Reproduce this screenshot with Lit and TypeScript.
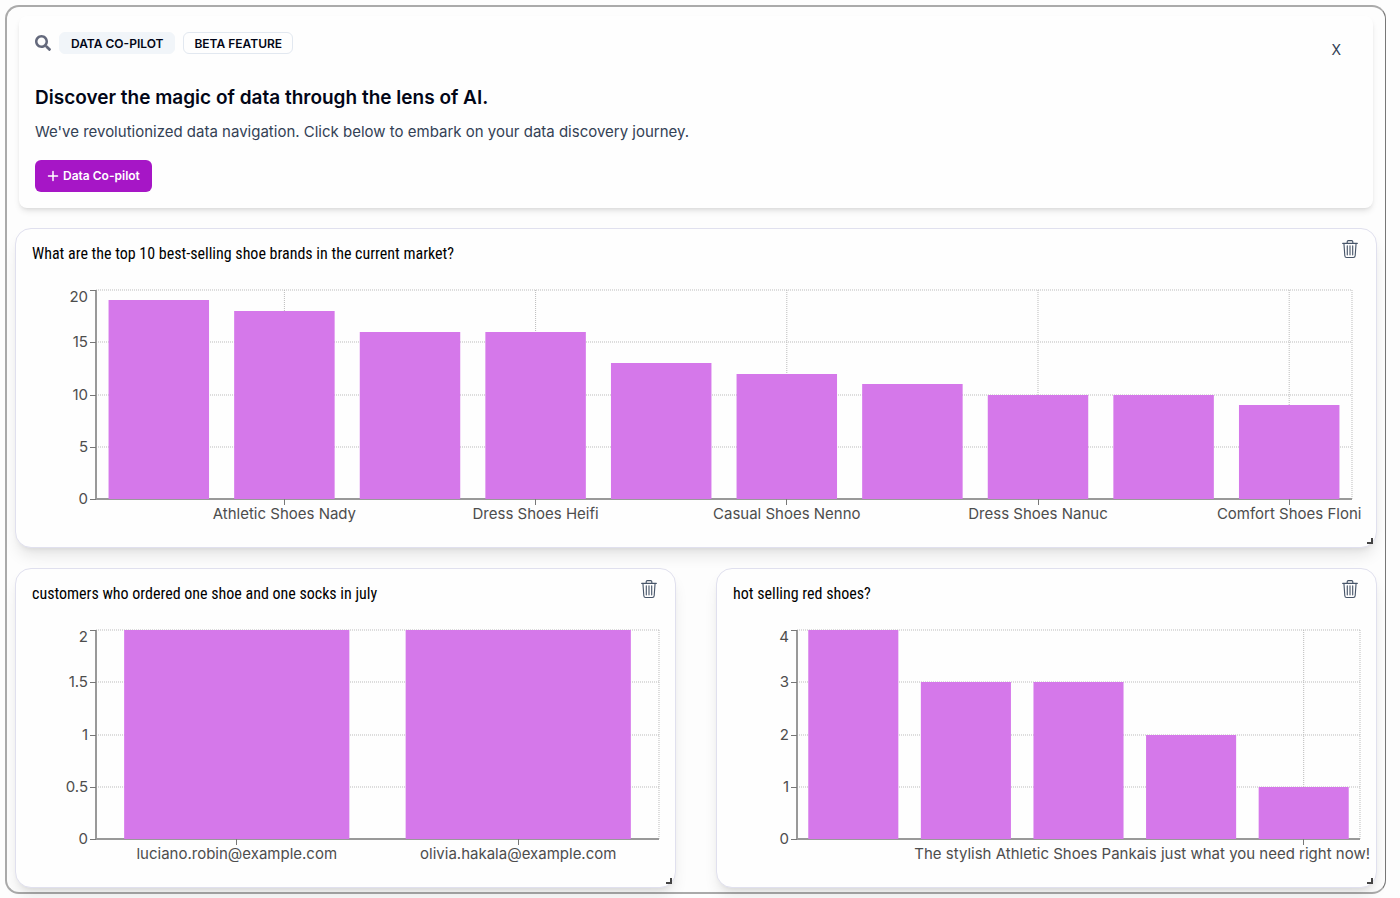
import { LitElement, html, svg, css } from "lit";
import { customElement, property } from "lit/decorators.js";

interface Bar {
  label: string;
  value: number;
  align: "none" | "middle" | "edge";
}

const bar = (value: number, label = "", align: Bar["align"] = label ? "middle" : "none"): Bar => ({
  label,
  value,
  align,
});

const PLOT_HEIGHT = 209;

@customElement("bar-chart")
export class BarChart extends LitElement {
  @property({ attribute: false }) bars: Bar[] = [];
  @property({ attribute: false }) ticks: number[] = [];
  @property() name = "";

  static styles = css`
    :host {
      display: block;
    }
    svg {
      display: block;
      width: 100%;
      height: 209px;
      overflow: visible;
    }
    text {
      font: 400 15px Inter, "Liberation Sans", sans-serif;
      fill: #4d4d4d;
    }
    .middle {
      text-anchor: middle;
    }
    .edge,
    .y-label {
      text-anchor: end;
    }
    .grid {
      stroke: #bbb;
      stroke-dasharray: 1 1;
    }
    .axis {
      stroke: #999;
      stroke-width: 2;
      shape-rendering: crispEdges;
    }
    .tick {
      stroke: #777;
      shape-rendering: crispEdges;
    }
    .bar {
      fill: #d578ea;
    }
  `;

  render() {
    const max = Math.max(...this.ticks, 1);
    const y = (v: number) => Math.round(PLOT_HEIGHT * (1 - v / max));
    const band = 100 / Math.max(this.bars.length, 1);
    const center = (i: number) => `${band * (i + 0.5)}%`;
    const labelled = this.bars.map((b, i) => ({ ...b, i })).filter((b) => b.align !== "none");
    return html`
      <svg role="img" aria-label=${this.name}>
        ${this.ticks.map((t) => svg`<line class="grid" x1="0" x2="100%" y1=${y(t)} y2=${y(t)} />`)}
        ${labelled.map((b) => svg`<line class="grid" x1=${center(b.i)} x2=${center(b.i)} y1="0" y2=${PLOT_HEIGHT} />`)}
        <line class="grid" x1="100%" x2="100%" y1="0" y2=${PLOT_HEIGHT} />
        <line class="axis" x1="0" x2="100%" y1=${PLOT_HEIGHT} y2=${PLOT_HEIGHT} />
        <line class="axis" x1="0" x2="0" y1="0" y2=${PLOT_HEIGHT} />
        ${this.bars.map(
          (b, i) => svg`<rect class="bar" x="${band * (i + 0.1)}%" width="${band * 0.8}%"
            y=${y(b.value)} height=${PLOT_HEIGHT - y(b.value)} />`
        )}
        ${this.ticks.map(
          (t) => svg`<line class="tick" x1="-6" x2="0" y1=${y(t)} y2=${y(t)} />
            <text class="y-label" x="-8" y=${Math.max(y(t), 7) + 5}>${t}</text>`
        )}
        ${labelled.map(
          (b) => svg`<line class="tick" x1=${center(b.i)} x2=${center(b.i)} y1=${PLOT_HEIGHT} y2=${PLOT_HEIGHT + 6} />
            <text class=${b.align} x=${b.align === "edge" ? "100%" : center(b.i)}
              dx=${b.align === "edge" ? 10 : 0} y=${PLOT_HEIGHT + 20}>${b.label}</text>`
        )}
      </svg>
    `;
  }
}

@customElement("chart-card")
export class ChartCard extends LitElement {
  @property() heading = "";
  @property({ attribute: false }) bars: Bar[] = [];
  @property({ attribute: false }) ticks: number[] = [];

  static styles = css`
    :host {
      display: block;
      min-width: 0;
    }
    .card {
      position: relative;
      box-sizing: border-box;
      height: 100%;
      border: 1px solid #e0e0ee;
      border-radius: 16px;
      padding: 11px 16px 48px;
      background: #fefefe;
      box-shadow: 0 10px 15px -3px rgb(0 0 0 / 0.1), 0 4px 6px -4px rgb(0 0 0 / 0.1);
    }
    header {
      display: flex;
      justify-content: space-between;
      align-items: flex-start;
    }
    h2 {
      margin: 2px 0 0;
      font: 400 16px/24px "Roboto Condensed", Roboto, sans-serif;
      color: #000;
    }
    button {
      display: flex;
      padding: 0;
      margin-right: 1px;
      border: 0;
      background: none;
      color: #475569;
      cursor: pointer;
    }
    bar-chart {
      margin: 24px 0 0 64px;
    }
    :host(.wide) bar-chart {
      margin-right: 8px;
    }
    .grip {
      position: absolute;
      right: 3px;
      bottom: 3px;
      width: 4px;
      height: 4px;
      border: solid #444;
      border-width: 0 2px 2px 0;
    }
  `;

  render() {
    return html`
      <section class="card">
        <header>
          <h2>${this.heading}</h2>
          <button type="button" aria-label="Delete chart">
            <svg width="18" height="18" viewBox="0 0 16 16" fill="none" stroke="currentColor" stroke-linecap="round" aria-hidden="true">
              <path d="M1.500 3H14.500M5.500 3V1.500Q5.500.5 6.500.5H9.500Q10.500.5 10.500 1.500V3M2.600 3L3.400 14Q3.500 15.500 5 15.500H11Q12.500 15.500 12.600 14L13.400 3M5.600 5.200V13.200M8 5.200V13.200M10.400 5.200V13.200" />
            </svg>
          </button>
        </header>
        <bar-chart .name=${this.heading} .bars=${this.bars} .ticks=${this.ticks}></bar-chart>
        <span class="grip"></span>
      </section>
    `;
  }
}

@customElement("app-root")
export class AppRoot extends LitElement {
  private brands = [
    bar(19),
    bar(18, "Athletic Shoes Nady"),
    bar(16),
    bar(16, "Dress Shoes Heifi"),
    bar(13),
    bar(12, "Casual Shoes Nenno"),
    bar(11),
    bar(10, "Dress Shoes Nanuc"),
    bar(10),
    bar(9, "Comfort Shoes Floni"),
  ];
  private customers = [bar(2, "luciano.robin@example.com"), bar(2, "olivia.hakala@example.com")];
  private redShoes = [
    bar(4),
    bar(3),
    bar(3),
    bar(2),
    bar(1, "The stylish Athletic Shoes Pankais just what you need right now!", "edge"),
  ];

  static styles = css`
    :host {
      display: block;
      padding: 5px 14px 5px 5px;
      background: #fdfdfd;
      font-family: Inter, "Liberation Sans", sans-serif;
    }
    .frame {
      border: 2px solid #aaa;
      border-right: 1px solid #777;
      border-radius: 14px;
      padding: 9px 8px 4px;
    }
    .intro {
      margin: 0 4px 20px;
      padding: 16px;
      border-radius: 8px;
      background: #fefefe;
      box-shadow: 0 4px 6px -1px rgb(0 0 0 / 0.1), 0 2px 4px -2px rgb(0 0 0 / 0.1);
    }
    .top {
      display: flex;
      justify-content: space-between;
      align-items: flex-start;
    }
    .tags {
      display: flex;
      align-items: center;
      gap: 8px;
    }
    .search {
      color: #64697c;
    }
    .tag {
      box-sizing: border-box;
      height: 22px;
      padding: 0 10px;
      border: 1px solid #e2e8f0;
      border-radius: 6px;
      font-size: 12px;
      line-height: 21px;
      font-weight: 600;
      color: #020617;
    }
    .filled {
      padding: 0 11px;
      background: #f1f5f9;
      border-color: #f1f5f9;
    }
    .close {
      margin: 8px 12px 0 0;
      padding: 0 4px;
      border: 0;
      background: none;
      font: 400 14px/20px Inter, sans-serif;
      color: #334155;
      cursor: pointer;
    }
    h1 {
      margin: 22px 0 0;
      font-size: 19px;
      line-height: 32px;
      font-weight: 600;
      color: #020617;
    }
    p {
      margin: 6px 0 16px;
      font-size: 15px;
      line-height: 24px;
      color: #334155;
    }
    .primary {
      display: flex;
      align-items: center;
      gap: 4px;
      height: 32px;
      padding: 0 12px;
      border: 0;
      border-radius: 6px;
      background: #a616c6;
      color: #fff;
      font: 600 12px/20px Inter, sans-serif;
      cursor: pointer;
    }
    .charts {
      display: grid;
      grid-template-columns: 1fr 1fr;
      gap: 20px 40px;
    }
    .wide {
      grid-column: 1 / -1;
    }
  `;

  render() {
    return html`
      <main class="frame">
        <section class="intro">
          <div class="top">
            <div class="tags">
              <svg class="search" width="16" height="16" viewBox="0 0 512 512" fill="currentColor" aria-hidden="true">
                <path d="M505 442.7L405.3 343c-4.500-4.500-10.600-7-17-7H372c27.600-35.300 44-79.700 44-128C416 93.100 322.900 0 208 0S0 93.100 0 208s93.100 208 208 208c48.300 0 92.700-16.400 128-44v16.300c0 6.400 2.500 12.500 7 17l99.700 99.700c9.400 9.400 24.600 9.400 33.900 0l28.300-28.300c9.400-9.400 9.400-24.600.1-34zM208 336c-70.700 0-128-57.200-128-128 0-70.700 57.200-128 128-128 70.700 0 128 57.200 128 128 0 70.700-57.200 128-128 128z" />
              </svg>
              <span class="tag filled">DATA CO-PILOT</span>
              <span class="tag">BETA FEATURE</span>
            </div>
            <button class="close" type="button" aria-label="Close">X</button>
          </div>
          <h1>Discover the magic of data through the lens of AI.</h1>
          <p>We've revolutionized data navigation. Click below to embark on your data discovery journey.</p>
          <button class="primary" type="button">
            <svg width="12" height="12" viewBox="0 0 12 12" stroke="currentColor" stroke-width="1.500" stroke-linecap="round" aria-hidden="true">
              <path d="M6 1.500V10.500M1.500 6H10.500" />
            </svg>
            Data Co-pilot
          </button>
        </section>
        <div class="charts">
          <chart-card
            class="wide"
            heading="What are the top 10 best-selling shoe brands in the current market?"
            .bars=${this.brands}
            .ticks=${[0, 5, 10, 15, 20]}
          ></chart-card>
          <chart-card
            heading="customers who ordered one shoe and one socks in july"
            .bars=${this.customers}
            .ticks=${[0, 0.5, 1, 1.5, 2]}
          ></chart-card>
          <chart-card
            heading="hot selling red shoes?"
            .bars=${this.redShoes}
            .ticks=${[0, 1, 2, 3, 4]}
          ></chart-card>
        </div>
      </main>
    `;
  }
}
